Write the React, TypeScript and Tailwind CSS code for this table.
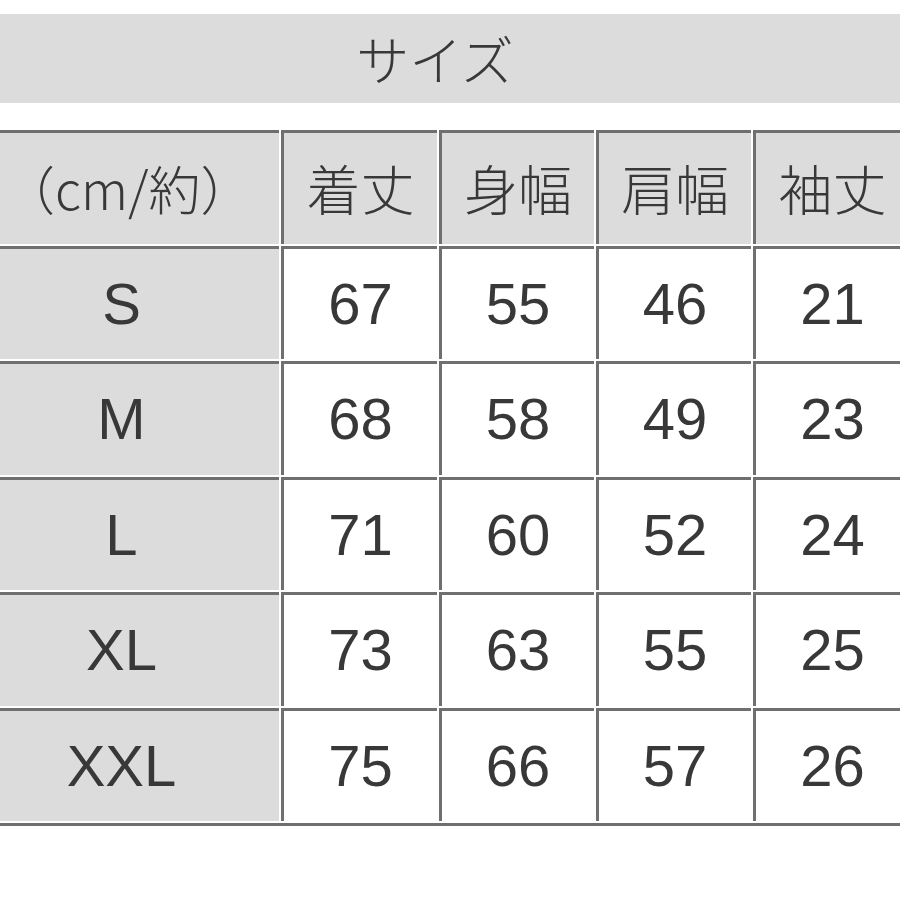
const headers = ["着丈", "身幅", "肩幅", "袖丈"];

const rows: { size: string; values: number[] }[] = [
  { size: "S", values: [67, 55, 46, 21] },
  { size: "M", values: [68, 58, 49, 23] },
  { size: "L", values: [71, 60, 52, 24] },
  { size: "XL", values: [73, 63, 55, 25] },
  { size: "XXL", values: [75, 66, 57, 26] },
];

const jp = { fontFamily: '"Noto Sans CJK JP", "Noto Sans", sans-serif' };
const latin = { fontFamily: '"Liberation Sans", Arial, sans-serif' };

// first column is cut at the page edge: no left rule, label shifted left
function Cell({
  children,
  gray,
  first,
  font,
}: {
  children: React.ReactNode;
  gray?: boolean;
  first?: boolean;
  font: React.CSSProperties;
}) {
  return (
    <div
      style={font}
      className={`flex h-[113.5px] items-center justify-center border-t-[3px] border-solid border-[#6f6f6f] text-[#383838] ${
        first ? "pr-[36px]" : "border-l-[3px]"
      } ${gray ? "bg-[#dcdcdc]" : "bg-white"}`}
    >
      {children}
    </div>
  );
}

export default function App() {
  return (
    <div className="min-h-[900px] w-[900px] overflow-hidden bg-white pt-[14px]">
      <div
        style={jp}
        className="flex h-[89px] items-center justify-center bg-[#dcdcdc] pr-[30px] text-[53px] font-light leading-none text-[#383838]"
      >
        サイズ
      </div>

      <div className="mt-[25px] w-[912px] border-b-[3px] border-solid border-[#6f6f6f] py-[2px]">
        <div className="grid grid-cols-[279px_156px_155px_155px_156px] gap-[2px]">
          <div
            style={jp}
            className="flex h-[113.5px] items-center border-t-[3px] border-solid border-[#6f6f6f] bg-[#dcdcdc] pl-[3px] text-[#383838]"
          >
            <span className="whitespace-nowrap text-[52px] font-light leading-none">（cm/約）</span>
          </div>
          {headers.map((h) => (
            <Cell key={h} gray font={jp}>
              <span className="text-[54px] font-light leading-none">{h}</span>
            </Cell>
          ))}

          {rows.map((r) => (
            <>
              <Cell key={r.size} gray first font={latin}>
                <span className="text-[58px] leading-none">{r.size}</span>
              </Cell>
              {r.values.map((v, i) => (
                <Cell key={r.size + i} font={latin}>
                  <span className="text-[58px] leading-none">{v}</span>
                </Cell>
              ))}
            </>
          ))}
        </div>
      </div>
    </div>
  );
}
